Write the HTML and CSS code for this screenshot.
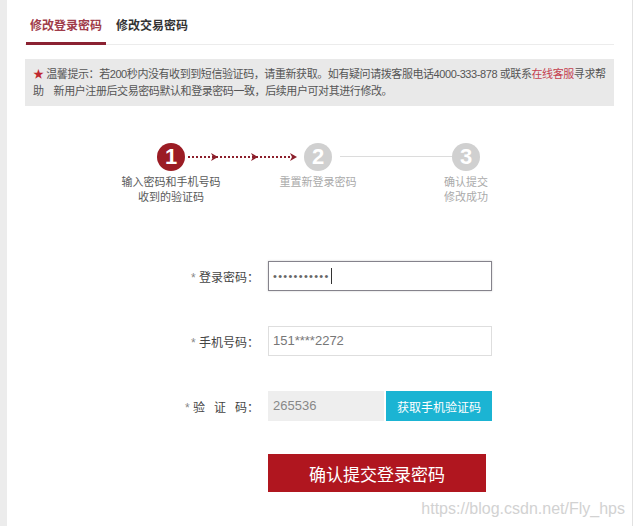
FILE: index.html
```html
<!DOCTYPE html>
<html lang = 'zh-CN'>
<head>
    <meta charset = 'UTF-8'>
    <title>修改登录密码</title>
    <link rel="stylesheet" href="styles.css">
</head>

<body>
    <div class = 'page'>
        <div class = 'side'></div>

        <div class = 'main'>
            <div class = 'tabs'>
                <span class = 'tab active'>修改登录密码</span>
                <span class = 'tab'>修改交易密码</span>
            </div>

            <div class = 'notice'>
                <span class = 'star'>★</span> 温馨提示：若200秒内没有收到到短信验证码，请重新获取。如有疑问请拨客服电话4000-333-878 或联系<span class = 'kefu'>在线客服</span>寻求帮<br>
                助<span class = 'indent'></span>新用户注册后交易密码默认和登录密码一致，后续用户可对其进行修改。
            </div>

            <div class = 'steps'>
                <div class = 'circle done'>1</div>
                <svg class = 'link' width = '119' height = '28' viewBox = '0 0 119 28'>
                    <line x1 = '3' y1 = '14' x2 = '108' y2 = '14' stroke = '#8c1f2b' stroke-width = '2' stroke-dasharray = '2 2'/>
                    <polygon points = '26,10 33,14 26,18 28,14' fill = '#8c1f2b'/>
                    <polygon points = '66,10 73,14 66,18 68,14' fill = '#8c1f2b'/>
                    <polygon points = '105,10 112,14 105,18 107,14' fill = '#8c1f2b'/>
                </svg>
                <div class = 'circle'>2</div>
                <div class = 'line'></div>
                <div class = 'circle'>3</div>

                <div class = 'label done col-1'>输入密码和手机号码<br>收到的验证码</div>
                <div class = 'label col-3'>重置新登录密码</div>
                <div class = 'label col-5'>确认提交<br>修改成功</div>
            </div>

            <div class = 'form'>
                <div class = 'row'>
                    <div class = 'lbl'><span class = 'req'>*</span> 登录密码：</div>
                    <div class = 'field focus'><span class = 'dots'>•••••••••••</span><span class = 'caret'></span></div>
                </div>
                <div class = 'row'>
                    <div class = 'lbl'><span class = 'req'>*</span> 手机号码：</div>
                    <div class = 'field'>151****2272</div>
                </div>
                <div class = 'row'>
                    <div class = 'lbl'><span class = 'req'>*</span> <span class = 'spaced'>验证</span>码：</div>
                    <div class = 'field code'>265536</div>
                    <button class = 'btn-code'>获取手机验证码</button>
                </div>
                <button class = 'btn-submit'>确认提交登录密码</button>
            </div>
        </div>
    </div>

    <div class = 'mark'>https://blog.csdn.net/Fly_hps</div>
</body>
</html>
```

FILE: styles.css
```css
body {
    margin : 0;
    background-color : #fff;
    font-family : "Liberation Sans", "Noto Sans CJK SC", sans-serif;
    color : #444;
}

.page {
    display : flex;
    min-height : 100vh;
}

.side {
    width : 7px;
    background-color : #ececec;
}

.main {
    width : 626px;
    box-sizing : border-box;
    padding : 0 18px;
    border-right : 1px solid #e2e2e2;
}

/* tabs */
.tabs {
    display : flex;
    margin-top : 17px;
    border-bottom : 1px solid #ececec;
}

.tab {
    font-size : 12px;
    line-height : 18px;
    font-weight : bold;
    color : #333;
    padding : 0 4px 7px;
    margin-left : 6px;
    border-bottom : 3px solid transparent;
    margin-bottom : -1px;
}

.tab.active {
    margin-left : 1px;
    color : #a03c4a;
    border-bottom-color : #8b2232;
}

/* notice */
.notice {
    margin-top : 14px;
    background-color : #e9e9e9;
    padding : 7px 8px 6px;
    font-size : 11px;
    line-height : 17px;
    letter-spacing : -0.42px;
    color : #555;
    white-space : nowrap;
}

.star {
    color : #c0282f;
}

.kefu {
    color : #c4404f;
}

.indent {
    display : inline-block;
    width : 10px;
}

/* steps */
.steps {
    display : grid;
    grid-template-columns : 28px 119px 28px 120px 28px;
    margin : 37px 0 0 132px;
}

.circle {
    width : 28px;
    height : 28px;
    border-radius : 50%;
    background-color : #d0d0d0;
    color : white;
    font-size : 22px;
    font-weight : bold;
    line-height : 28px;
    text-align : center;
}

.circle.done {
    background-color : #9b1c24;
}

.line {
    height : 1px;
    background-color : #dcdcdc;
    margin : 13px 0 0 8px;
}

.label {
    grid-row : 2;
    margin : 4px -50px 0;
    font-size : 11px;
    line-height : 15px;
    text-align : center;
    color : #aaa;
}

.label.done {
    color : #5a5a5a;
}

.col-1 { grid-column : 1; }
.col-3 { grid-column : 3; }
.col-5 { grid-column : 5; }

/* form */
.form {
    margin-top : 56px;
}

.row {
    display : flex;
    align-items : center;
    height : 30px;
    margin-bottom : 35px;
}

.row:nth-child(3) {
    margin-bottom : 33px;
}

.lbl {
    width : 243px;
    box-sizing : border-box;
    padding-right : 9px;
    text-align : right;
    font-size : 12px;
    color : #444;
}

.req {
    color : #888;
}

.spaced {
    letter-spacing : 9px;
}

.field {
    width : 224px;
    height : 30px;
    box-sizing : border-box;
    border : 1px solid #dedede;
    padding : 0 4px;
    font-size : 13px;
    line-height : 28px;
    color : #777;
    display : flex;
    align-items : center;
}

.field.focus {
    border-color : #85838c;
    box-shadow : 0 0 2px rgba(0,0,0,0.2);
}

.dots {
    font-size : 11px;
    letter-spacing : 1.3px;
    color : #666;
}

.caret {
    width : 1px;
    height : 16px;
    background-color : #333;
    margin-left : 1px;
}

.field.code {
    width : 116px;
    background-color : #eeeeee;
    border-color : #eeeeee;
    color : #888;
}

.btn-code {
    width : 106px;
    height : 30px;
    margin-left : 2px;
    border : none;
    background-color : #1bb4d3;
    color : white;
    font-family : inherit;
    font-size : 12px;
    padding : 0;
}

.btn-submit {
    display : block;
    margin-left : 243px;
    width : 218px;
    height : 38px;
    border : none;
    background-color : #b0161f;
    color : white;
    font-family : inherit;
    font-size : 17px;
    padding : 0;
}

.mark {
    position : absolute;
    right : 9px;
    bottom : 8px;
    font-family : "Liberation Sans", sans-serif;
    font-size : 16px;
    color : #d2d2d2;
}
```
